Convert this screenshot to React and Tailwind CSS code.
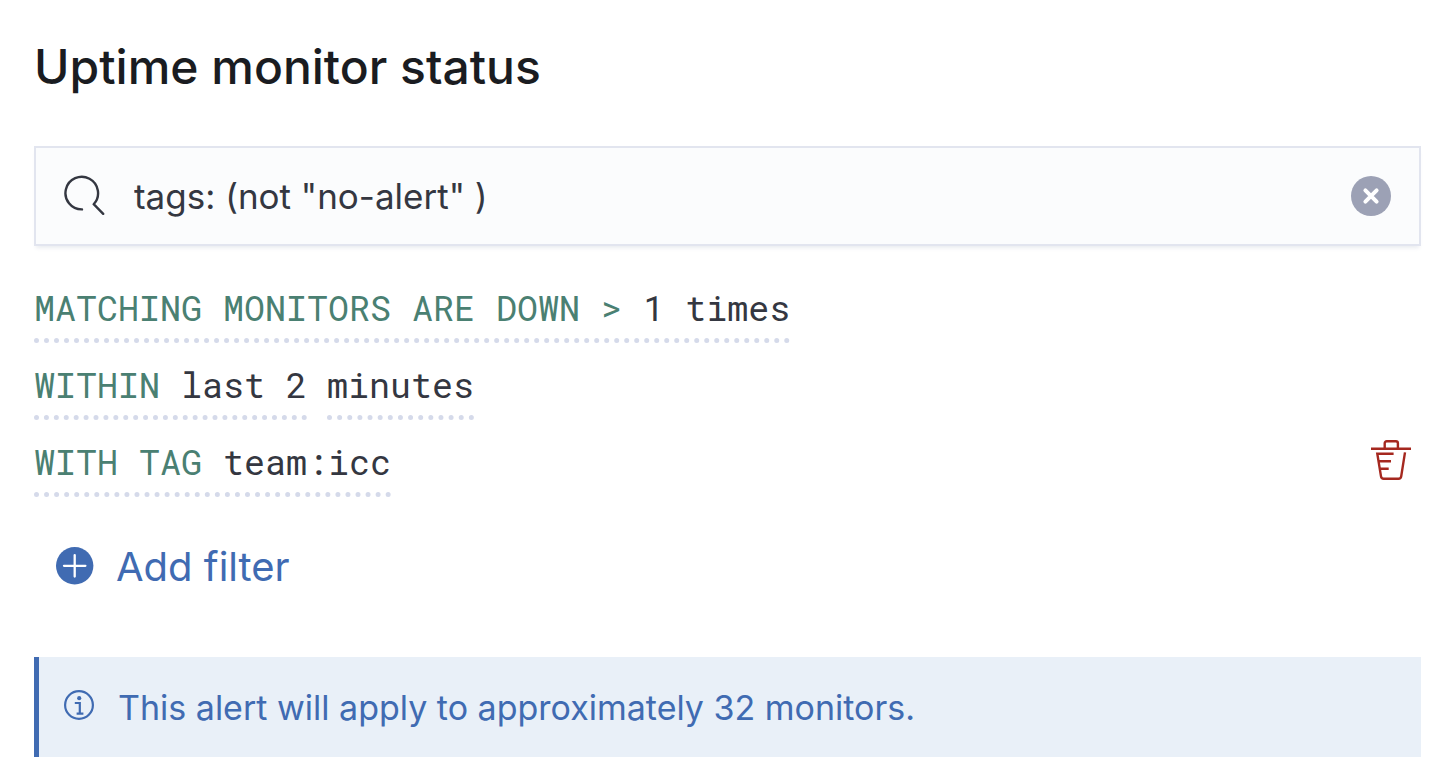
import { useState } from 'react';

const SearchIcon = () => (
  <svg width="42" height="42" viewBox="0 0 42 42" fill="none" stroke="#343741" strokeWidth="2.4" strokeLinecap="round" strokeLinejoin="round" aria-hidden="true">
    <path d="M18 34.4A16.3 16.3 0 1 1 29.7 29.2L39.2 38.8" />
  </svg>
);

const ClearIcon = () => (
  <svg width="40" height="40" viewBox="0 0 40 40" fill="none" aria-hidden="true">
    <circle cx="20" cy="20" r="20" fill="#9ca1b5" />
    <path d="M14.4 14.4l11.2 11.2M25.6 14.4L14.4 25.6" stroke="#fff" strokeWidth="4" strokeLinecap="round" />
  </svg>
);

const TrashIcon = () => (
  <svg width="40" height="40" viewBox="0 0 40 40" fill="none" stroke="#a5281f" strokeWidth="2.4" aria-hidden="true">
    <path d="M0 8.8h40" />
    <path d="M13.7 8.8V3.2a2 2 0 0 1 2-2h9.2a2 2 0 0 1 2 2v5.6" />
    <path d="M22.6 13.7H6.3L10 36.4a2.8 2.8 0 0 0 2.7 2.4h14.8a2.8 2.8 0 0 0 2.7-2.4L34 12.4" />
    <path d="M7.8 21.2H20M9.2 28.8h8.5" />
  </svg>
);

const PlusIcon = () => (
  <svg width="38" height="40" viewBox="0 0 38 40" fill="none" aria-hidden="true">
    <circle cx="18.7" cy="18.8" r="18.7" fill="#406bb2" />
    <path d="M18.7 8.1v21.4M8 18.8h21.4" stroke="#fff" strokeWidth="2.3" strokeLinecap="round" />
  </svg>
);

const InfoIcon = () => (
  <svg width="30" height="36" viewBox="0 0 30 36" fill="none" stroke="#406bb2" strokeWidth="2.2" aria-hidden="true">
    <circle cx="15" cy="15" r="13.9" />
    <circle cx="15.2" cy="8.2" r="2.1" fill="#406bb2" stroke="none" />
    <path d="M10.8 13h5v10.6M12.6 23.6h6.8" />
  </svg>
);

const Expression = ({ description, value }) => (
  <button
    type="button"
    className="border-b-5 border-dotted border-[#d5daea] pb-[10px] font-['Roboto_Mono','Liberation_Mono',monospace] text-[35px] leading-[42px] whitespace-pre text-[#343741] cursor-pointer"
  >
    {description && <span className="text-[#4a8072] uppercase">{description} </span>}
    {value}
  </button>
);

const App = () => {
  const [query, setQuery] = useState('tags: (not "no-alert" )');

  return (
    <main className="bg-white pt-[34px] pr-[30px] pb-[15px] pl-[34px] font-['Inter',sans-serif] text-[#343741]">
      <h1 className="text-[48px] leading-[66px] font-medium text-[#1a1c21]">Uptime monitor status</h1>

      {/* Query */}
      <div className="mt-[46px] flex h-[100px] items-center border-2 border-[#e2e5ef] bg-[#fbfcfd] pr-7 pl-7 shadow-[0_4px_4px_-2px_rgba(152,162,179,0.2)]">
        <SearchIcon />
        <input
          type="text"
          aria-label="Filter monitors"
          value={query}
          onChange={(e) => setQuery(e.target.value)}
          className="ml-7 min-w-0 flex-1 bg-transparent text-[35px] leading-[52px] outline-none"
        />
        <button type="button" aria-label="Clear query" onClick={() => setQuery('')} className="cursor-pointer">
          <ClearIcon />
        </button>
      </div>

      {/* Conditions */}
      <div className="mt-10 flex flex-col gap-5">
        <div className="flex flex-wrap gap-5">
          <Expression description="Matching monitors are down >" value="1 times" />
        </div>
        <div className="flex flex-wrap gap-5">
          <Expression description="Within" value="last 2" />
          <Expression value="minutes" />
        </div>
        <div className="flex items-start justify-between pr-[10px]">
          <Expression description="With tag" value="team:icc" />
          <button type="button" aria-label="Remove tag filter" className="cursor-pointer">
            <TrashIcon />
          </button>
        </div>
      </div>

      <button type="button" className="mt-10 ml-[22px] flex items-center gap-[22px] text-[40px] leading-[60px] text-[#406bb2] cursor-pointer">
        <PlusIcon />
        Add filter
      </button>

      {/* Callout */}
      <div className="mt-[60px] flex h-[100px] items-center gap-6 border-l-5 border-[#406bb2] bg-[#e9f0f8] pt-[2px] pl-[25px] text-[#406bb2]">
        <InfoIcon />
        <p className="text-[34px] leading-[52px]">This alert will apply to approximately 32 monitors.</p>
      </div>
    </main>
  );
};

export default App;
